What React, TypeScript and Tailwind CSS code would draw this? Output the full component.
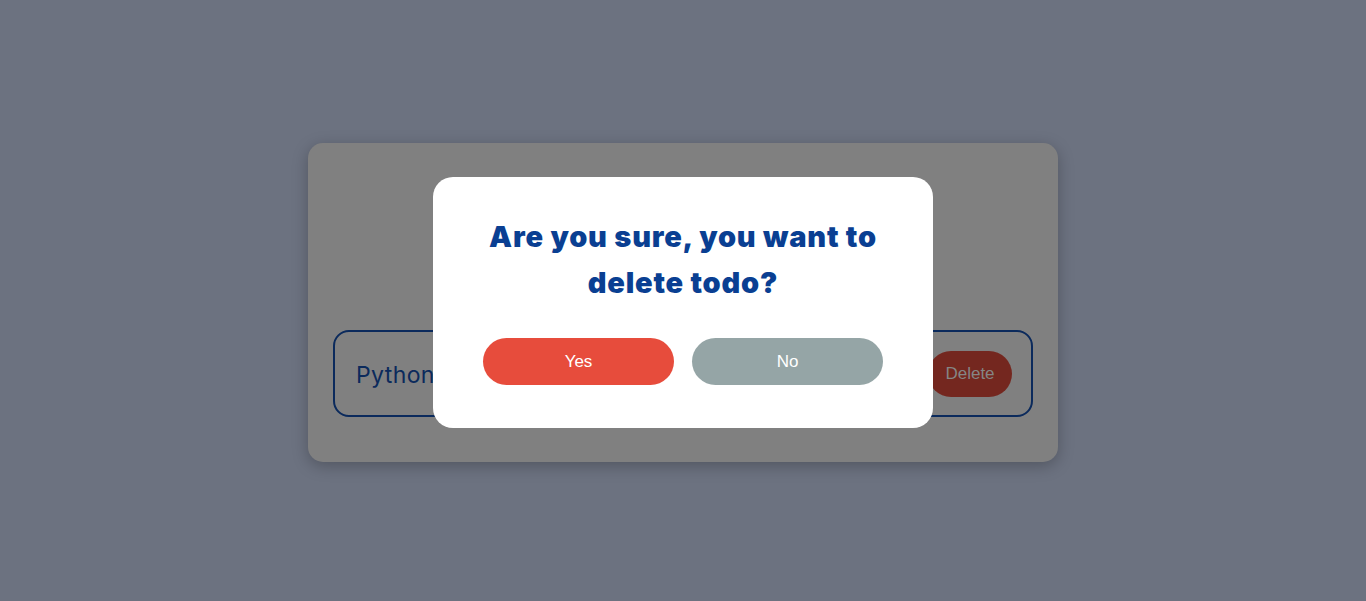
export default function App() {
  return (
    <div className="relative min-h-screen bg-[#6c7280] flex items-center justify-center pt-[4px] font-['Liberation_Sans',sans-serif]">
      <div className="w-[750px] h-[319px] bg-[#808080] rounded-[15px] shadow-[0_4px_16px_rgba(0,0,0,0.25)] flex flex-col justify-end px-[25px] pb-[45px]">
        <div className="h-[87px] border-2 border-[#0b2a5c] rounded-[16px] flex items-center justify-between pl-[21px] pr-[19px]">
          <span className="pt-[3px] text-[23px] text-[#0b2a5c] font-['Inter',sans-serif] font-normal tracking-[0.4px]">Python</span>
          <button className="w-[84px] h-[46px] rounded-full bg-[#74271f] text-[#858585] text-[17px]">
            Delete
          </button>
        </div>
      </div>

      <div className="absolute inset-0 flex items-center justify-center pt-[4px]">
        <div className="w-[500px] h-[251px] bg-white rounded-[20px] pt-[37px] px-[40px] flex flex-col items-center">
          <h2 className="text-[29px] leading-[46px] font-black text-[#0a3f92] text-center font-['Inter',sans-serif] tracking-[0.8px] whitespace-nowrap">
            Are you sure, you want to
            <br />
            delete todo?
          </h2>
          <div className="mt-[32px] flex gap-[18px]">
            <button className="w-[191px] h-[47px] rounded-full bg-[#e74c3c] text-white text-[17px]">Yes</button>
            <button className="w-[191px] h-[47px] rounded-full bg-[#95a5a6] text-white text-[17px]">No</button>
          </div>
        </div>
      </div>
    </div>
  );
}
